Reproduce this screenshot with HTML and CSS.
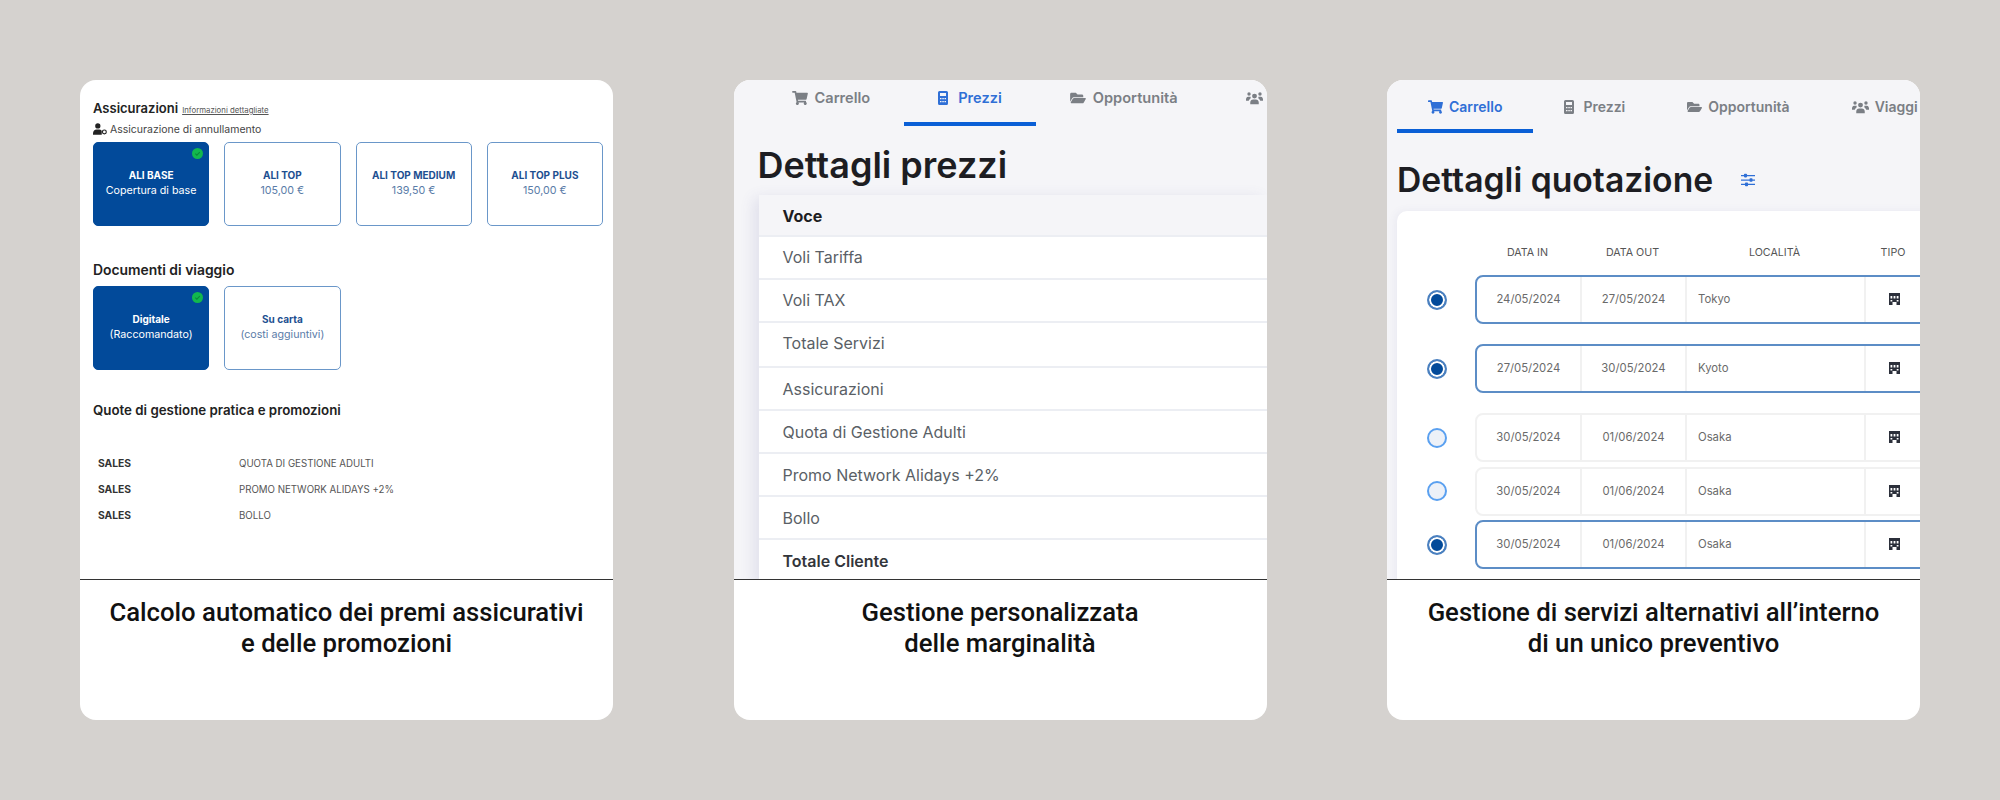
FILE: index.html
```html
<!DOCTYPE html>
<html lang="it">
<head>
    <meta charset="UTF-8">
    <meta name="viewport" content="width=device-width, initial-scale=1.0">
    <title>Funzionalità preventivi</title>
    <link rel="stylesheet" href="styles.css">
</head>
<body>
    <svg class="icon-defs" xmlns="http://www.w3.org/2000/svg">
        <symbol id="i-cart" viewBox="0 0 576 512"><path d="M528.12 301.319l47.273-208C578.806 78.301 567.391 64 551.99 64H159.208l-9.166-44.81C147.758 8.021 137.93 0 126.529 0H24C10.745 0 0 10.745 0 24v16c0 13.255 10.745 24 24 24h69.883l70.248 343.435C147.325 417.1 136 435.222 136 456c0 30.928 25.072 56 56 56s56-25.072 56-56c0-15.674-6.447-29.835-16.824-40h209.647C430.447 426.165 424 440.326 424 456c0 30.928 25.072 56 56 56s56-25.072 56-56c0-22.172-12.888-41.332-31.579-50.405l5.517-24.276c3.413-15.018-8.002-29.319-23.403-29.319H218.117l-6.545-32h293.145c11.206 0 20.92-7.754 23.403-18.681z"/></symbol>
        <symbol id="i-folder" viewBox="0 0 576 512"><path d="M572.694 292.093L500.27 416.248A63.997 63.997 0 0 1 444.989 448H45.025c-18.523 0-30.064-20.093-20.731-36.093l72.424-124.155A64 64 0 0 1 152 256h399.964c18.523 0 30.064 20.093 20.73 36.093zM152 224h328v-48c0-26.51-21.49-48-48-48H272l-64-64H48C21.49 64 0 85.49 0 112v278.046l69.077-118.418C86.214 242.25 117.989 224 152 224z"/></symbol>
        <symbol id="i-calc" viewBox="0 0 10 14"><path fill-rule="evenodd" d="M1.500 0h7A1.500 1.500 0 0 1 10 1.500v11A1.500 1.500 0 0 1 8.500 14h-7A1.500 1.500 0 0 1 0 12.500v-11A1.500 1.500 0 0 1 1.500 0zM2 2v3h6V2zM2 7v1.300h1.500V7zM4.300 7v1.300h1.500V7zM6.500 7v1.300H8V7zM2 10v1.300h1.500V10zM4.300 10v1.300h1.500V10zM6.500 10v1.300H8V10z"/></symbol>
        <symbol id="i-users" viewBox="0 0 18 14"><circle cx="9" cy="5" r="2.600"/><circle cx="3.200" cy="2.800" r="1.800"/><circle cx="14.800" cy="2.800" r="1.800"/><path d="M4.500 13.500v-1.800C4.500 9.800 6 8.600 7.500 8.600h3c1.500 0 3 1.200 3 3.100v1.800zM0 8.500C0 6.800 1 5.600 2.300 5.600h1.800c.4 0 .7.100 1 .3-.4.700-.500 1.300-.400 1.800C3.600 8.200 3 9.200 3 10H0zM18 8.500c0-1.700-1-2.900-2.300-2.900h-1.800c-.4 0-.7.100-1 .3.400.7.500 1.300.400 1.800 1.100.5 1.700 1.500 1.700 2.300h3z"/></symbol>
        <symbol id="i-person" viewBox="0 0 16 13"><circle cx="5.500" cy="3" r="3"/><path d="M0 13v-1.500C0 9 2 7.200 4 7.200h3c1.200 0 2.200.5 3 1.300V13z"/><circle cx="13" cy="9.800" r="2.200" fill="none" stroke="currentColor" stroke-width="1.300"/></symbol>
        <symbol id="i-sliders" viewBox="0 0 14 14"><path d="M0 2h14v1.300H0zM0 6.400h14v1.300H0zM0 10.800h14v1.300H0z"/><rect x="3" y=".8" width="3" height="3.600" rx=".8"/><rect x="8.500" y="5.200" width="3" height="3.600" rx=".8"/><rect x="4" y="9.600" width="3" height="3.600" rx=".8"/></symbol>
        <symbol id="i-hotel" viewBox="0 0 11 12"><path fill-rule="evenodd" d="M0 0h11v12H7.500V9h-4v3H0zM1.500 3v2.500h1.800V3zM4.600 3v2.500h1.800V3zM7.700 3v2.500h1.800V3zM1.500 7v1.500h1.800V7zM7.700 7v1.500h1.800V7z"/></symbol>
        <symbol id="i-check" viewBox="0 0 12 12"><circle cx="6" cy="6" r="6" fill="#12b84e"/><path d="M3.600 6.200l1.700 1.700 3.200-3.400" fill="none" stroke="#0b8a3a" stroke-width="1.200"/></symbol>
    </svg>

    <main class="cards">
        <!-- Card 1: assicurazioni -->
        <section class="card">
            <div class="screen screen-plain">
                <div class="section-head">
                    <h3 class="section-title">Assicurazioni</h3>
                    <a class="info-link">Informazioni dettagliate</a>
                </div>
                <div class="sub-label">
                    <svg class="person-icon"><use href="#i-person"/></svg>
                    Assicurazione di annullamento
                </div>
                <div class="tile-grid">
                    <div class="tile tile-on">
                        <svg class="tile-check"><use href="#i-check"/></svg>
                        <strong>ALI BASE</strong>
                        <span>Copertura di base</span>
                    </div>
                    <div class="tile"><strong>ALI TOP</strong><span>105,00 €</span></div>
                    <div class="tile"><strong>ALI TOP MEDIUM</strong><span>139,50 €</span></div>
                    <div class="tile"><strong>ALI TOP PLUS</strong><span>150,00 €</span></div>
                </div>

                <h3 class="section-title docs-title">Documenti di viaggio</h3>
                <div class="tile-grid">
                    <div class="tile tile-on">
                        <svg class="tile-check"><use href="#i-check"/></svg>
                        <strong>Digitale</strong>
                        <span>(Raccomandato)</span>
                    </div>
                    <div class="tile"><strong>Su carta</strong><span>(costi aggiuntivi)</span></div>
                </div>

                <h3 class="section-title quote-title">Quote di gestione pratica e promozioni</h3>
                <div class="fee-list">
                    <b>SALES</b><span>QUOTA DI GESTIONE ADULTI</span>
                    <b>SALES</b><span>PROMO NETWORK ALIDAYS +2%</span>
                    <b>SALES</b><span>BOLLO</span>
                </div>
            </div>
            <p class="caption">Calcolo automatico dei premi assicurativi<br>e delle promozioni</p>
        </section>

        <!-- Card 2: prezzi -->
        <section class="card">
            <div class="screen screen-prices">
                <nav class="tabs">
                    <a class="tab"><svg class="tab-cart"><use href="#i-cart"/></svg>Carrello</a>
                    <a class="tab active"><svg class="tab-calc"><use href="#i-calc"/></svg>Prezzi</a>
                    <a class="tab"><svg class="tab-cart"><use href="#i-folder"/></svg>Opportunità</a>
                    <a class="tab"><svg class="tab-users"><use href="#i-users"/></svg>Viaggi</a>
                </nav>
                <h1 class="page-title">Dettagli prezzi</h1>
                <div class="price-table">
                    <div class="price-row price-head">Voce</div>
                    <div class="price-row">Voli Tariffa</div>
                    <div class="price-row">Voli TAX</div>
                    <div class="price-row price-row-tall">Totale Servizi</div>
                    <div class="price-row">Assicurazioni</div>
                    <div class="price-row">Quota di Gestione Adulti</div>
                    <div class="price-row">Promo Network Alidays +2%</div>
                    <div class="price-row">Bollo</div>
                    <div class="price-row price-total">Totale Cliente</div>
                </div>
            </div>
            <p class="caption">Gestione personalizzata<br>delle marginalità</p>
        </section>

        <!-- Card 3: quotazione -->
        <section class="card">
            <div class="screen screen-quote">
                <nav class="tabs">
                    <a class="tab active"><svg class="tab-cart"><use href="#i-cart"/></svg>Carrello</a>
                    <a class="tab"><svg class="tab-calc"><use href="#i-calc"/></svg>Prezzi</a>
                    <a class="tab"><svg class="tab-cart"><use href="#i-folder"/></svg>Opportunità</a>
                    <a class="tab"><svg class="tab-users"><use href="#i-users"/></svg>Viaggi</a>
                </nav>
                <div class="title-line">
                    <h1 class="page-title">Dettagli quotazione</h1>
                    <svg class="sliders-icon"><use href="#i-sliders"/></svg>
                </div>
                <div class="quote-panel">
                    <div class="quote-head">
                        <span>DATA IN</span><span>DATA OUT</span><span>LOCALITÀ</span><span>TIPO</span>
                    </div>
                    <div class="quote-line gap-large">
                        <span class="radio on"></span>
                        <div class="quote-row on">
                            <span>24/05/2024</span><span>27/05/2024</span><span class="place">Tokyo</span>
                            <span><svg class="hotel-icon"><use href="#i-hotel"/></svg></span>
                        </div>
                    </div>
                    <div class="quote-line gap-large">
                        <span class="radio on"></span>
                        <div class="quote-row on">
                            <span>27/05/2024</span><span>30/05/2024</span><span class="place">Kyoto</span>
                            <span><svg class="hotel-icon"><use href="#i-hotel"/></svg></span>
                        </div>
                    </div>
                    <div class="quote-line">
                        <span class="radio"></span>
                        <div class="quote-row">
                            <span>30/05/2024</span><span>01/06/2024</span><span class="place">Osaka</span>
                            <span><svg class="hotel-icon"><use href="#i-hotel"/></svg></span>
                        </div>
                    </div>
                    <div class="quote-line">
                        <span class="radio"></span>
                        <div class="quote-row">
                            <span>30/05/2024</span><span>01/06/2024</span><span class="place">Osaka</span>
                            <span><svg class="hotel-icon"><use href="#i-hotel"/></svg></span>
                        </div>
                    </div>
                    <div class="quote-line">
                        <span class="radio on"></span>
                        <div class="quote-row on">
                            <span>30/05/2024</span><span>01/06/2024</span><span class="place">Osaka</span>
                            <span><svg class="hotel-icon"><use href="#i-hotel"/></svg></span>
                        </div>
                    </div>
                </div>
            </div>
            <p class="caption">Gestione di servizi alternativi all’interno<br>di un unico preventivo</p>
        </section>
    </main>
</body>
</html>
```
FILE: styles.css
```css
* {
    box-sizing: border-box;
}

body {
    margin: 0;
    background-color: #d5d2cf;
    font-family: Inter, "Noto Sans", sans-serif;
    color: #222;
}

.icon-defs {
    display: none;
}

.cards {
    display: flex;
    justify-content: space-between;
    padding: 80px 80px 0;
}

.card {
    width: 533px;
    height: 640px;
    background-color: #fff;
    border-radius: 16px;
    overflow: hidden;
}

.screen {
    height: 500px;
    border-bottom: 1px solid #333;
    overflow: hidden;
}

.caption {
    margin: 0;
    padding-top: 17px;
    font-family: Roboto, sans-serif;
    font-size: 25.7px;
    font-weight: 500;
    line-height: 31px;
    text-align: center;
    color: #111;
}

/* Card 1 */
.screen-plain {
    padding: 20px 10px 0 13px;
}

.section-head {
    display: flex;
    align-items: baseline;
    gap: 4px;
}

.section-title {
    margin: 0;
    font-size: 13px;
    font-weight: 600;
    line-height: 16px;
    color: #222;
}

.info-link {
    font-size: 7.8px;
    color: #555;
    text-decoration: underline;
}

.sub-label {
    display: flex;
    align-items: center;
    gap: 3px;
    height: 14px;
    margin-top: 6px;
    margin-bottom: 6px;
    font-size: 10.5px;
    color: #444;
}

.person-icon {
    width: 14px;
    height: 12px;
    color: #222;
    fill: currentColor;
}

.tile-grid {
    display: grid;
    grid-template-columns: repeat(4, 1fr);
    gap: 15px;
}

.tile {
    position: relative;
    display: flex;
    flex-direction: column;
    justify-content: center;
    align-items: center;
    height: 84px;
    padding-bottom: 2px;
    border: 1px solid #6a97c9;
    border-radius: 5px;
    font-size: 10.7px;
    line-height: 16px;
    color: #5a7ca8;
}

.tile strong {
    font-size: 10px;
    font-weight: 700;
    color: #1d4f91;
}

.tile-on {
    background-color: #024a9a;
    border-color: #024a9a;
    color: #fff;
}

.tile-on strong {
    color: #fff;
}

.tile-check {
    position: absolute;
    top: 5px;
    right: 5px;
    width: 11px;
    height: 11px;
}

.docs-title {
    margin-top: 36px;
    margin-bottom: 8px;
    font-size: 13.9px;
}

.quote-title {
    margin-top: 32px;
    font-size: 13.3px;
}

.fee-list {
    display: grid;
    grid-template-columns: 141px 1fr;
    grid-auto-rows: 26px;
    align-items: center;
    margin-top: 32px;
    padding-left: 5px;
    font-size: 9.7px;
    color: #555;
}

.fee-list b {
    font-size: 10.3px;
    font-weight: 700;
    color: #333;
}

/* Tabs, used on both app screens */
.screen-prices,
.screen-quote {
    background-color: #f5f5f8;
}

.tabs {
    display: flex;
    white-space: nowrap;
}

.tab {
    display: flex;
    align-items: center;
    gap: 7px;
    font-weight: 600;
    line-height: 20px;
    color: #7b7f85;
    fill: #7b7f85;
    border-bottom: 4px solid transparent;
}

.tab.active {
    color: #2f6fd6;
    fill: #2f6fd6;
    border-bottom-color: #0a5fd6;
}

.tab-cart {
    width: 16px;
    height: 14px;
}

.tab-calc {
    width: 10px;
    height: 14px;
    margin-right: 3px;
}

.tab-users {
    width: 17px;
    height: 14px;
}

.page-title {
    margin: 0;
    font-weight: 600;
    line-height: 40px;
    color: #1d1d22;
}

/* Card 2 */
.screen-prices {
    padding-left: 24px;
}

.screen-prices .tab {
    padding: 8px 34px 14px;
    font-size: 14.6px;
}

.screen-prices .page-title {
    margin-top: 19px;
    font-size: 36px;
}

.price-table {
    margin-top: 10px;
    margin-left: 1px;
    background-color: #fff;
    border-radius: 6px 0 0 0;
    box-shadow: -6px 2px 14px rgba(90, 90, 160, 0.12);
}

.price-row {
    height: 43px;
    padding-left: 24px;
    border-bottom: 2px solid #eceef3;
    font-size: 16px;
    line-height: 41px;
    color: #5a5f66;
}

.price-row-tall {
    height: 45px;
}

.price-row-tall ~ .price-row {
    line-height: 43px;
}

.price-head {
    height: 42px;
    background-color: #f5f5f8;
    font-weight: 700;
    line-height: 42px;
    color: #1d1d22;
}

.price-row.price-total {
    font-weight: 600;
    color: #33363b;
}

/* Card 3 */
.screen-quote {
    padding-left: 10px;
}

.screen-quote .tab {
    gap: 6px;
    padding: 17px 31px 12px;
    font-size: 14px;
}

.screen-quote .tab-cart {
    width: 15px;
}

.title-line {
    display: flex;
    align-items: center;
    gap: 28px;
    margin-top: 27px;
}

.title-line .page-title {
    font-size: 33.7px;
}

.sliders-icon {
    width: 14px;
    height: 14px;
    fill: #2f6fd6;
}

.quote-panel {
    width: 700px;
    height: 400px;
    margin-top: 11px;
    padding-top: 34px;
    background-color: #fff;
    border-radius: 10px 0 0 0;
    box-shadow: -2px 0 8px rgba(90, 90, 160, 0.07);
}

.quote-head,
.quote-row {
    display: grid;
    grid-template-columns: 105px 105px 179px 58px 200px;
    text-align: center;
}

.quote-head {
    margin-left: 78px;
    margin-bottom: 14px;
    font-size: 10.7px;
    line-height: 16px;
    color: #555;
}

.quote-line {
    display: flex;
    align-items: center;
    margin-bottom: 4.5px;
}

.gap-large {
    margin-bottom: 20px;
}

.radio {
    flex: none;
    width: 20px;
    height: 20px;
    margin-left: 30px;
    margin-right: 28px;
    border: 2px solid #5aa0f0;
    border-radius: 50%;
    background-color: #edf1f8;
}

.radio.on {
    border: 2px solid #4a80c0;
    background-color: #024a9a;
    box-shadow: inset 0 0 0 2px #fff;
}

.quote-row {
    width: 700px;
    height: 49px;
    border: 2px solid #f1f1f1;
    border-radius: 8px 0 0 8px;
    font-size: 11.3px;
    line-height: 45px;
    color: #6a6a6a;
}

.quote-row.on {
    border-color: #5c8dc6;
}

.quote-row span {
    border-right: 2px solid #f1f1f1;
}

.quote-row .place {
    padding-left: 11px;
    text-align: left;
}

.hotel-icon {
    width: 11px;
    height: 12px;
    fill: #2b2f3a;
    vertical-align: -2px;
}
```
